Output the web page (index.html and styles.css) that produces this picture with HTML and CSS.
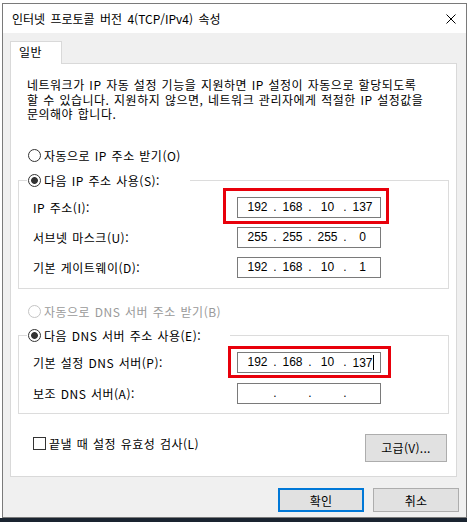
FILE: index.html
```html
<!DOCTYPE html>
<html lang="ko">
<head>
<meta charset="utf-8">
<title>인터넷 프로토콜 버전 4(TCP/IPv4) 속성</title>
<link rel="stylesheet" href="styles.css">
</head>
<body>
<div class="screen">
  <div class="window">
    <div class="titlebar">
      <span class="title">인터넷 프로토콜 버전 4(TCP/IPv4) 속성</span>
      <svg class="close" width="10" height="10" viewBox="0 0 10 10"><path d="M0.5 0.5 L9.5 9.5 M9.5 0.5 L0.5 9.5" stroke="#000" stroke-width="1" fill="none"/></svg>
    </div>
    <div class="body">
      <div class="tabs"><div class="tab">일반</div></div>
      <div class="panel">
        <p class="desc"><span class="line">네트워크가 IP 자동 설정 기능을 지원하면 IP 설정이 자동으로 할당되도록</span><span class="line">할 수 있습니다. 지원하지 않으면, 네트워크 관리자에게 적절한 IP 설정값을</span><span class="line">문의해야 합니다.</span></p>

        <div class="radio-row r-auto-ip"><span class="radio"></span><span class="rtext">자동으로 IP 주소 받기(O)</span></div>

        <fieldset class="group g-ip">
          <legend class="legend l-ip"><span class="radio on"></span><span class="rtext">다음 IP 주소 사용(S):</span></legend>
          <div class="field">
            <span class="label">IP 주소(I):</span>
            <div class="ip marked m-ip"><span class="seg">192</span><span class="dot">.</span><span class="seg">168</span><span class="dot">.</span><span class="seg">10</span><span class="dot">.</span><span class="seg">137</span></div>
          </div>
          <div class="field">
            <span class="label">서브넷 마스크(U):</span>
            <div class="ip"><span class="seg">255</span><span class="dot">.</span><span class="seg">255</span><span class="dot">.</span><span class="seg">255</span><span class="dot">.</span><span class="seg">0</span></div>
          </div>
          <div class="field">
            <span class="label">기본 게이트웨이(D):</span>
            <div class="ip"><span class="seg">192</span><span class="dot">.</span><span class="seg">168</span><span class="dot">.</span><span class="seg">10</span><span class="dot">.</span><span class="seg">1</span></div>
          </div>
        </fieldset>

        <div class="radio-row r-auto-dns disabled"><span class="radio"></span><span class="rtext">자동으로 DNS 서버 주소 받기(B)</span></div>

        <fieldset class="group g-dns">
          <legend class="legend l-dns"><span class="radio on"></span><span class="rtext">다음 DNS 서버 주소 사용(E):</span></legend>
          <div class="field">
            <span class="label">기본 설정 DNS 서버(P):</span>
            <div class="ip marked m-dns"><span class="seg">192</span><span class="dot">.</span><span class="seg">168</span><span class="dot">.</span><span class="seg">10</span><span class="dot">.</span><span class="seg">137<span class="caret"></span></span></div>
          </div>
          <div class="field">
            <span class="label">보조 DNS 서버(A):</span>
            <div class="ip"><span class="seg"></span><span class="dot">.</span><span class="seg"></span><span class="dot">.</span><span class="seg"></span><span class="dot">.</span><span class="seg"></span></div>
          </div>
        </fieldset>

        <div class="bottom-row">
          <div class="check-row"><span class="checkbox"></span><span class="ctext">끝낼 때 설정 유효성 검사(L)</span></div>
          <div class="btn btn-adv">고급(V)...</div>
        </div>
      </div>
      <div class="actions">
        <div class="btn btn-ok">확인</div>
        <div class="btn btn-cancel">취소</div>
      </div>
    </div>
  </div>
  <div class="taskbar"></div>
</div>
</body>
</html>
```

FILE: styles.css
```css
html, body {
  margin: 0;
  padding: 0;
}
body {
  font-family: "Noto Sans CJK KR", "Noto Sans", sans-serif;
  font-size: 12px;
  letter-spacing: 0.5px;
  word-spacing: 0.8px;
  color: #000;
  background: #fff;
}
.screen {
  width: 467px;
  height: 522px;
  overflow: hidden;
  display: flex;
  flex-direction: column;
  background: #fff;
}
.window {
  box-sizing: border-box;
  width: 465px;
  height: 515px;
  margin: 3px 0 0 2px;
  border: 1px solid #7a7a7a;
  background: #f0f0f0;
  display: flex;
  flex-direction: column;
  flex: none;
}
.taskbar {
  flex: 1;
  background: #1a2430;
}
.titlebar {
  height: 29px;
  background: #fff;
  display: flex;
  align-items: center;
  justify-content: space-between;
  padding: 0 10px 0 9px;
  flex: none;
}
.title {
  font-size: 12px;
  line-height: 16px;
  letter-spacing: 0;
  word-spacing: 2px;
  white-space: nowrap;
}
.close {
  display: block;
  margin-top: 1px;
}
.body {
  padding: 8px 7px 0 7px;
  display: flex;
  flex-direction: column;
}
.tabs {
  display: flex;
  height: 22px;
}
.tab {
  box-sizing: border-box;
  width: 52px;
  height: 23px;
  border: 1px solid #d9d9d9;
  border-bottom: none;
  background: #fff;
  padding-left: 8px;
  line-height: 20px;
  position: relative;
  z-index: 1;
}
.panel {
  box-sizing: border-box;
  width: 447px;
  height: 414px;
  border: 1px solid #d9d9d9;
  background: #fff;
  padding: 0 7px;
}
.desc {
  margin: 14px 0 0 9px;
  line-height: 14.5px;
}
.line {
  display: block;
  white-space: nowrap;
}
.radio-row, .legend {
  display: flex;
  align-items: center;
  height: 16px;
  white-space: nowrap;
}
.radio-row {
  margin-left: 10px;
}
.r-auto-ip {
  margin-top: 26px;
}
.r-auto-dns {
  margin-top: 15px;
}
.radio {
  box-sizing: border-box;
  width: 13px;
  height: 13px;
  border-radius: 50%;
  border: 1px solid #333;
  background: #fff;
  flex: none;
}
.radio.on {
  background: radial-gradient(circle, #333 0, #333 3px, #fff 3.8px);
}
.rtext {
  margin-left: 3px;
}
.disabled {
  color: #9a9a9a;
}
.disabled .radio {
  border-color: #c4c4c4;
}
.group {
  margin: 0;
  border: 1px solid #dcdcdc;
  padding: 8px 0 10px 0;
}
.g-ip {
  margin-top: 9px;
}
.g-dns {
  margin-top: 8px;
  padding-bottom: 9px;
}
.legend {
  padding: 0 0 0 1px;
  margin-left: 8px;
  box-sizing: border-box;
}
.l-ip {
  width: 163px;
}
.l-dns {
  width: 203px;
}
.field {
  display: grid;
  grid-template-columns: 204px 144px;
  align-items: center;
  height: 21px;
  margin-left: 14px;
}
.g-ip .field + .field {
  margin-top: 9px;
}
.g-dns .field + .field {
  margin-top: 10px;
}
.label {
  white-space: nowrap;
}
.ip {
  box-sizing: border-box;
  height: 21px;
  border: 1px solid #7a7a7a;
  padding-left: 5px;
  display: flex;
  align-items: center;
  font-family: "Liberation Sans", Arial, sans-serif;
  font-size: 12px;
  letter-spacing: 0;
  word-spacing: 0;
  background: #fff;
}
.seg {
  width: 29px;
  text-align: center;
  white-space: nowrap;
}
.dot {
  width: 6px;
  text-align: center;
}
.caret {
  display: inline-block;
  width: 1px;
  height: 15px;
  background: #000;
  vertical-align: -3px;
  margin-right: -1px;
}
.marked {
  position: relative;
}
.marked::after {
  content: "";
  position: absolute;
  border: 3px solid #e8000b;
  pointer-events: none;
}
.m-ip::after {
  left: -15px;
  right: -9px;
  top: -10px;
  bottom: -7px;
}
.m-dns::after {
  left: -10px;
  right: -11px;
  top: -7px;
  bottom: -6px;
}
.bottom-row {
  display: flex;
  justify-content: space-between;
  align-items: flex-start;
  margin: 20px 2px 0 15px;
}
.check-row {
  display: flex;
  align-items: center;
  margin-top: 3px;
  height: 13px;
  white-space: nowrap;
}
.checkbox {
  box-sizing: border-box;
  width: 13px;
  height: 13px;
  border: 1px solid #333;
  background: #fff;
}
.ctext {
  margin-left: 3px;
}
.btn {
  box-sizing: border-box;
  display: flex;
  align-items: center;
  justify-content: center;
  background: #e1e1e1;
  border: 1px solid #adadad;
  white-space: nowrap;
  letter-spacing: 0.3px;
}
.btn-adv {
  width: 82px;
  height: 28px;
}
.actions {
  display: flex;
  justify-content: flex-end;
  gap: 9px;
  margin-top: 11px;
  padding-right: 0;
}
.btn-ok, .btn-cancel {
  width: 86px;
  height: 24px;
}
.btn-ok {
  border: 2px solid #0078d7;
}
```
